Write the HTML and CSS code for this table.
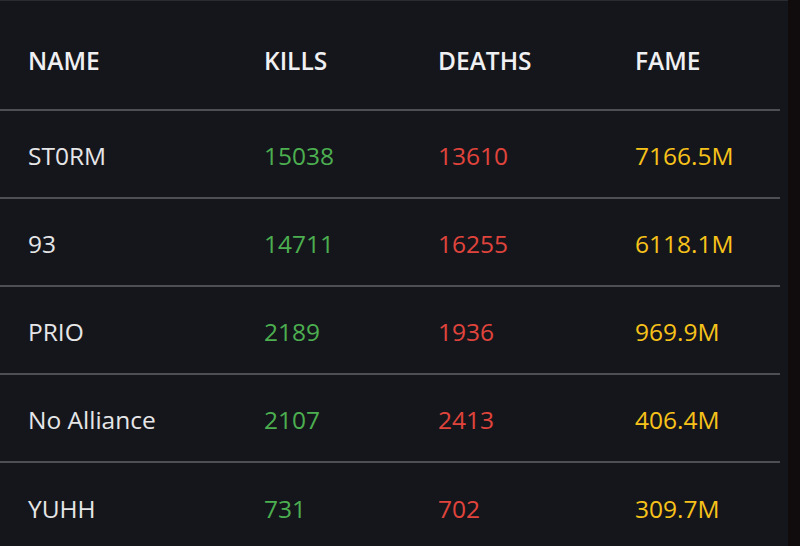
FILE: index.html
```html
<!DOCTYPE html>
<html>
<head>
<meta charset="utf-8">
<link rel="stylesheet" href="styles.css">
</head>
<body>
<div class="panel">
  <div class="table">
    <div class="row head">
      <div class="c c1">NAME</div>
      <div class="c c2">KILLS</div>
      <div class="c c3">DEATHS</div>
      <div class="c c4">FAME</div>
    </div>
    <div class="row">
      <div class="c c1 name">ST0RM</div>
      <div class="c c2 kills">15038</div>
      <div class="c c3 deaths">13610</div>
      <div class="c c4 fame">7166.5M</div>
    </div>
    <div class="row">
      <div class="c c1 name">93</div>
      <div class="c c2 kills">14711</div>
      <div class="c c3 deaths">16255</div>
      <div class="c c4 fame">6118.1M</div>
    </div>
    <div class="row">
      <div class="c c1 name">PRIO</div>
      <div class="c c2 kills">2189</div>
      <div class="c c3 deaths">1936</div>
      <div class="c c4 fame">969.9M</div>
    </div>
    <div class="row">
      <div class="c c1 name">No Alliance</div>
      <div class="c c2 kills">2107</div>
      <div class="c c3 deaths">2413</div>
      <div class="c c4 fame">406.4M</div>
    </div>
    <div class="row last">
      <div class="c c1 name">YUHH</div>
      <div class="c c2 kills">731</div>
      <div class="c c3 deaths">702</div>
      <div class="c c4 fame">309.7M</div>
    </div>
  </div>
</div>
</body>
</html>
```
FILE: styles.css
```css
html, body {
  margin: 0;
  padding: 0;
  background: #100c0e;
  width: 800px;
  height: 546px;
  overflow: hidden;
}
.panel {
  width: 788px;
  height: 546px;
  background: #15161b;
  border-top: 1px solid #2a2b30;
  box-sizing: border-box;
  font-family: "Open Sans", "Noto Sans", sans-serif;
  font-size: 24.5px;
}
.table {
  width: 780px;
}
.row {
  display: flex;
  align-items: center;
  height: 88px;
  box-sizing: border-box;
  border-bottom: 2px solid #4e4f55;
  padding-top: 2px;
}
.row.head {
  height: 110px;
  padding-top: 10px;
  color: #f0f0f2;
  font-weight: 600;
}
.row.last {
  border-bottom: none;
}
.c {
  padding-left: 28px;
  box-sizing: border-box;
  white-space: nowrap;
}
.c1 { width: 236px; }
.c2 { width: 174px; }
.c3 { width: 197px; }
.c4 { flex: 1; }
.name { color: #e6e6e8; }
.kills { color: #4caf50; }
.deaths { color: #e0443c; }
.fame { color: #f7c21a; }
```
